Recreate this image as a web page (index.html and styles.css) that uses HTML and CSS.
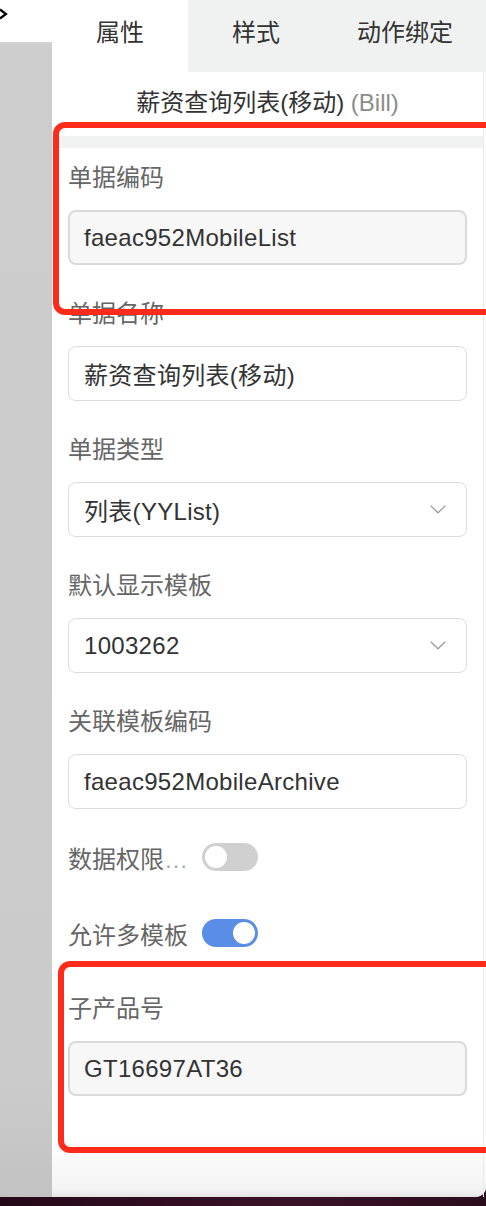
FILE: index.html
```html
<!DOCTYPE html>
<html lang="zh-CN">
<head>
<meta charset="utf-8">
<title>属性面板</title>
<link rel="stylesheet" href="styles.css">
</head>
<body>
<div class="screen">
  <div class="main">
    <aside class="side">
      <div class="side-top">
        <svg class="side-arrow" width="8" height="12" viewBox="0 0 8 12"><polyline points="0,1.5 6,6 0,10.5" fill="none" stroke="#000" stroke-width="2.2"/></svg>
      </div>
      <div class="side-gray"></div>
    </aside>
    <section class="panel">
      <nav class="tabs">
        <div class="tab active">属性</div>
        <div class="tab">样式</div>
        <div class="tab wide">动作绑定</div>
      </nav>
      <div class="content">
        <div class="title">薪资查询列表(移动) <span class="title-type">(Bill)</span></div>
        <div class="sep"></div>
        <div class="form">
          <div class="field">
            <div class="label">单据编码</div>
            <div class="input disabled">faeac952MobileList</div>
          </div>
          <div class="field">
            <div class="label">单据名称</div>
            <div class="input">薪资查询列表(移动)</div>
          </div>
          <div class="field">
            <div class="label">单据类型</div>
            <div class="input select"><span>列表(YYList)</span><svg class="chev" width="16" height="9" viewBox="0 0 16 9"><polyline points="0.7,0.7 8,7.8 15.3,0.7" fill="none" stroke="#9a9a9a" stroke-width="1.2"/></svg></div>
          </div>
          <div class="field">
            <div class="label">默认显示模板</div>
            <div class="input select"><span>1003262</span><svg class="chev" width="16" height="9" viewBox="0 0 16 9"><polyline points="0.7,0.7 8,7.8 15.3,0.7" fill="none" stroke="#9a9a9a" stroke-width="1.2"/></svg></div>
          </div>
          <div class="field">
            <div class="label">关联模板编码</div>
            <div class="input">faeac952MobileArchive</div>
          </div>
          <div class="toggle-row first">
            <div class="toggle-label">数据权限<span class="dots">…</span></div>
            <div class="switch"><span class="knob"></span></div>
          </div>
          <div class="toggle-row">
            <div class="toggle-label">允许多模板</div>
            <div class="switch on"><span class="knob"></span></div>
          </div>
          <div class="field last">
            <div class="label">子产品号</div>
            <div class="input disabled">GT16697AT36</div>
          </div>
        </div>
      </div>
      <div class="mark mark-a"></div>
      <div class="mark mark-b"></div>
    </section>
  </div>
  <div class="dock"></div>
</div>
</body>
</html>
```
FILE: styles.css
```css
html, body {
  margin: 0;
  padding: 0;
}
body {
  width: 486px;
  height: 1206px;
  overflow: hidden;
  background: #2c0c1e;
  font-family: "Liberation Sans", "Noto Sans CJK SC", sans-serif;
}
.screen {
  display: flex;
  flex-direction: column;
  height: 1206px;
}
.main {
  display: flex;
  height: 1197px;
  background: #fff;
  border-bottom-right-radius: 10px;
}
.dock {
  flex: 1;
  background: linear-gradient(to right, #240818, #3a1228 60%, #2a0c1c);
}
.side {
  width: 52px;
  display: flex;
  flex-direction: column;
}
.side-top {
  height: 42px;
  background: #fff;
}
.side-arrow {
  display: block;
  margin-top: 8px;
}
.side-gray {
  flex: 1;
  background: linear-gradient(to bottom, #cdcdcd 0, #cbcbcb 90%, #c2c2c2 100%);
  border-top: 2px solid #d2d2d2;
}
.panel {
  position: relative;
  width: 434px;
  display: flex;
  flex-direction: column;
  background: linear-gradient(to bottom, #fff 0, #fff 1140px, #f3f3f3 1190px, #e4e4e4 1197px);
  border-bottom-right-radius: 10px;
}
.tabs {
  display: flex;
  height: 72px;
  background: #f0f2f2;
}
.tab {
  width: 136px;
  text-align: center;
  line-height: 66px;
  font-size: 24px;
  color: #333;
}
.tab.active {
  background: #fff;
}
.tab.wide {
  flex: 1;
  width: auto;
}
.content {
  flex: 1;
  margin-right: 2px;
  border-right: 1px solid #ebebeb;
}
.title {
  height: 64px;
  line-height: 62px;
  text-align: center;
  font-size: 24px;
  color: #333;
}
.title-type {
  color: #8c8c8c;
}
.sep {
  height: 12px;
  background: #f1f3f3;
}
.form {
  padding: 15px 16px 0 16px;
}
.field {
  margin-bottom: 34px;
}
.label {
  height: 30px;
  line-height: 30px;
  font-size: 24px;
  color: #666;
  margin-bottom: 17px;
}
.input {
  box-sizing: border-box;
  height: 55px;
  border: 1.5px solid #dcdcdc;
  border-radius: 8px;
  background: #fff;
  padding: 0 20px 0 15px;
  display: flex;
  align-items: center;
  font-size: 24px;
  color: #333;
  letter-spacing: 0.3px;
}
.input.disabled {
  background: #f7f7f7;
  border: 2px solid #dadada;
  padding-left: 14px;
}
.input.select {
  justify-content: space-between;
}
.chev {
  display: block;
}
.toggle-row {
  display: flex;
  align-items: center;
  height: 28px;
  margin-bottom: 48px;
}
.toggle-row.first {
  margin-top: 1px;
}
.toggle-label {
  width: 120px;
  margin-right: 14px;
  font-size: 24px;
  color: #666;
  white-space: nowrap;
}
.dots {
  color: #aaa;
}
.switch {
  box-sizing: border-box;
  width: 56px;
  height: 28px;
  border-radius: 14px;
  background: #d0d0d0;
  padding: 3px;
  display: flex;
  align-items: center;
}
.switch.on {
  background: #5a8de6;
  justify-content: flex-end;
}
.knob {
  width: 22px;
  height: 22px;
  border-radius: 50%;
  background: #fff;
}
.field.last {
  margin-top: -1px;
  margin-bottom: 0;
}
.mark {
  position: absolute;
  box-sizing: border-box;
  border: 6px solid #fe2b1b;
  border-radius: 12px;
  right: -20px;
  pointer-events: none;
}
.mark-a {
  left: 1px;
  top: 122px;
  height: 193px;
}
.mark-b {
  left: 6px;
  top: 961px;
  height: 192px;
}
```
